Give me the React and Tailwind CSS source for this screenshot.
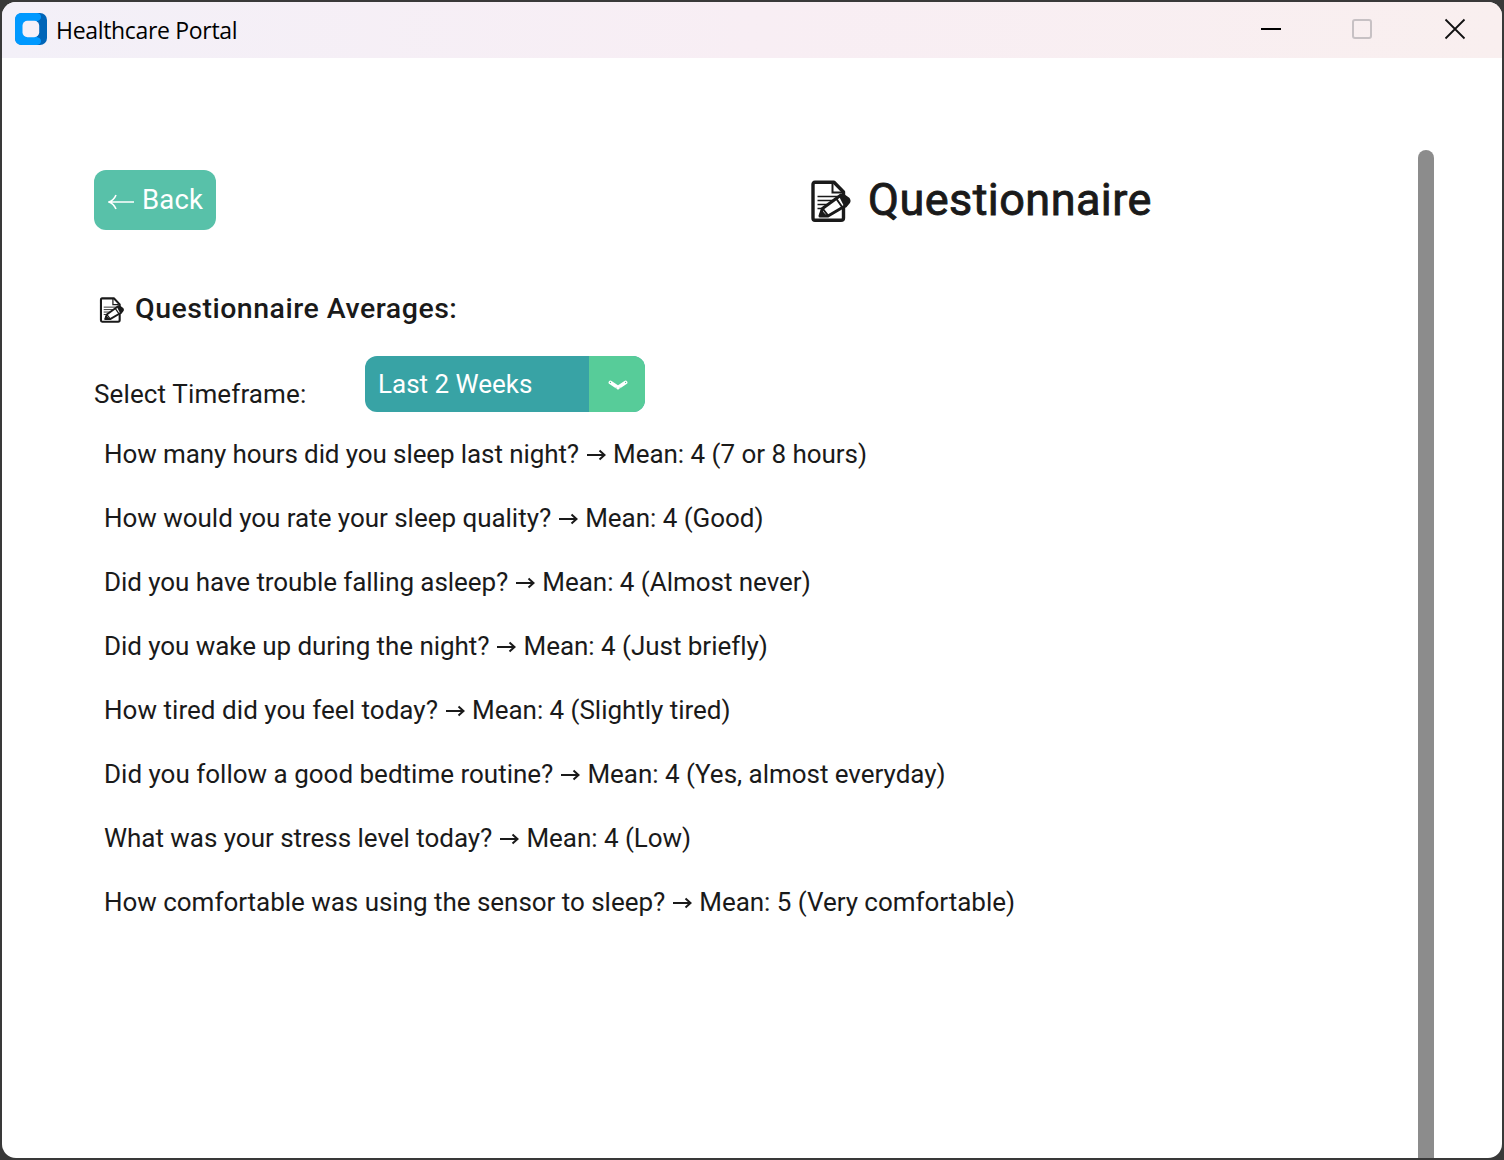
import React from "react";

const rows = [
  ["How many hours did you sleep last night?", "Mean: 4 (7 or 8 hours)", "tracking-[-0.1px]"],
  ["How would you rate your sleep quality?", "Mean: 4 (Good)", "tracking-[-0.03px]"],
  ["Did you have trouble falling asleep?", "Mean: 4 (Almost never)", "tracking-[-0.06px]"],
  ["Did you wake up during the night?", "Mean: 4 (Just briefly)", "tracking-[-0.06px]"],
  ["How tired did you feel today?", "Mean: 4 (Slightly tired)", "tracking-[0.04px]"],
  ["Did you follow a good bedtime routine?", "Mean: 4 (Yes, almost everyday)", "tracking-normal"],
  ["What was your stress level today?", "Mean: 4 (Low)", "tracking-[-0.03px]"],
  ["How comfortable was using the sensor to sleep?", "Mean: 5 (Very comfortable)", "tracking-[-0.03px]"],
];

function MemoIcon({ className }) {
  return (
    <svg viewBox="0 0 42 44" className={className} fill="none" stroke="#1a1a1a">
      <path d="M24 2.2H5Q3 2.2 3 4.5V38Q3 40.2 5 40.2H31Q33.5 40.2 33.5 38V12Z" fill="#fff" strokeWidth="3.4" strokeLinejoin="round" />
      <path d="M22.5 3V12.5H32" strokeWidth="2" />
      <path d="M7.5 16.5H29M7.5 20.5H24M7.5 24.5H18M7.5 28.5H13" strokeWidth="1.4" />
      <path d="M10 36L12.5 28.5L31 15L37.5 22.5L35 26L18 36Z" fill="#fff" strokeWidth="3" strokeLinejoin="round" />
      <path d="M30.5 16L33.5 15.5L38.5 19Q39.8 21 38.5 22.5L35.5 26Z" fill="#1a1a1a" strokeWidth="2.8" strokeLinejoin="round" />
      <path d="M26.5 19L32.5 27.5M13 29L18 35.5" strokeWidth="2" />
      <path d="M10 36L11.5 31.5L15 35.5Z" fill="#1a1a1a" strokeWidth="2.2" strokeLinejoin="round" />
    </svg>
  );
}

function TitleBar() {
  return (
    <header className="flex h-14 shrink-0 items-center bg-linear-to-r from-[#f3f0f8] via-[#f8eef4] to-[#f9efef] pl-[13px] pr-9">
      <svg viewBox="0 0 32 32" className="-mt-0.5 size-8">
        <rect width="32" height="32" rx="7" fill="#0065b8" />
        <path d="M7 0H22Q26 0.5 26 4Q26 7 22 8V24Q26 25 26 28Q26 31.5 22 32H7Q0 32 0 25V7Q0 0 7 0Z" fill="#0099ff" />
        <rect x="7.5" y="7.7" width="16.7" height="16.6" rx="5" fill="#f4f0f8" />
      </svg>
      <h1 className="ml-[9px] whitespace-nowrap font-['Open_Sans',sans-serif] text-[23px] leading-8 tracking-[-0.32px] text-black">
        Healthcare Portal
      </h1>
      <div className="-mt-0.5 ml-auto flex items-center">
        <span className="h-0.5 w-5 bg-black" />
        <span className="ml-[71px] size-5 rounded-[3px] border-2 border-[#c7c1c4]" />
        <svg viewBox="0 0 22 22" className="ml-[72px] size-[22px]" stroke="#111" strokeWidth="1.8">
          <path d="M1.5 1.5L20.5 20.5M20.5 1.5L1.5 20.5" />
        </svg>
      </div>
    </header>
  );
}

export default function App() {
  return (
    <div className="h-[1160px] w-[1504px] overflow-hidden bg-[#393939] px-0.5 py-0.5 font-[Roboto,sans-serif] text-[#1a1a1a] [font-variant-ligatures:none]">
      <div className="flex h-full flex-col overflow-hidden rounded-[14px] bg-white">
        <TitleBar />
        <div className="flex min-h-0 flex-1 pt-[92px]">
          <main className="flex-1 pl-[92px] pt-5">
            <div className="flex h-[60px] items-center">
              <button className="flex h-[60px] w-[122px] items-center rounded-xl bg-[#58c1a9] pl-[14px] text-[27.5px] tracking-[0.2px] text-white">
                <svg viewBox="0 0 26 16" className="mt-1 h-4 w-[26px]" fill="none" stroke="white" strokeWidth="1.6">
                  <path d="M26 8H2M8 1Q6 6 1 8Q6 10 8 15" />
                </svg>
                <span className="ml-2">Back</span>
              </button>
              <h2 className="ml-[594px] flex items-center whitespace-nowrap text-[45px] font-normal leading-[60px] tracking-[0.45px]">
                <MemoIcon className="mt-[3px] h-11 w-[42px]" />
                <span className="ml-4 [-webkit-text-stroke:0.9px_#1a1a1a]">Questionnaire</span>
              </h2>
            </div>
            <h3 className="mt-[59px] flex h-10 items-center pl-[5px] text-[28.5px] font-medium tracking-[0.5px]">
              <MemoIcon className="mt-[3px] h-[27px] w-[26px]" />
              <span className="ml-2.5">Questionnaire Averages:</span>
            </h3>
            <div className="mt-[27px] flex h-14">
              <label className="w-[271px] pt-5 text-[26px] leading-9 tracking-[0.13px]">Select Timeframe:</label>
              <button className="flex h-14 w-[280px] overflow-hidden rounded-xl bg-[#38a3a5] text-[26px] text-white">
                <span className="flex h-full flex-1 items-center pl-[13px]">Last 2 Weeks</span>
                <span className="flex h-full w-14 items-center justify-center bg-[#57cc99] pl-px pt-0.5">
                  <svg viewBox="0 0 20 11" className="h-[11px] w-5" fill="none" stroke="white" strokeLinecap="round">
                    <path d="M2.5 2.5L10 7.5L17.5 2.5" strokeWidth="3.8" />
                    <path d="M2.4 2.4h.1M17.5 2.4h.1M8 8h.1M12 8h.1" stroke="#57cc99" strokeWidth="1.1" />
                  </svg>
                </span>
              </button>
            </div>
            <ul className="pl-2.5 pt-2.5">
              {rows.map(([question, answer, tracking]) => (
                <li key={question} className="flex h-16 items-center whitespace-nowrap text-[26px]">
                  <span className={tracking}>{question}</span>
                  <svg viewBox="0 0 19 12" className="ml-2 mr-[7px] mt-0.5 h-3 w-[19px]" fill="none" stroke="#1a1a1a" strokeWidth="2">
                    <path d="M0 6H17.5M12.5 1.5L17.5 6L12.5 10.5" />
                  </svg>
                  <span className="tracking-[-0.03px]">{answer}</span>
                </li>
              ))}
            </ul>
          </main>
          <div className="mr-[68px] w-4 rounded-t-full bg-[#8c8c8c]" />
        </div>
      </div>
    </div>
  );
}
